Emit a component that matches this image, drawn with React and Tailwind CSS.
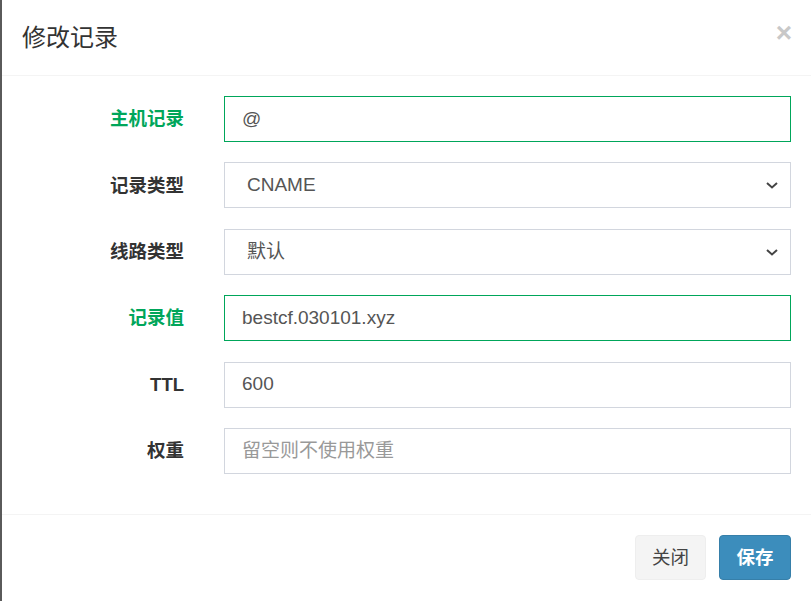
import React from "react";

const font = { fontFamily: '"Liberation Sans", "Noto Sans CJK SC", sans-serif' };

function Chevron() {
  return (
    <svg width="14" height="10" viewBox="0 0 14 10" className="absolute right-[11px] top-1/2 -translate-y-1/2">
      <path d="M2 3 L7 7.5 L12 3" fill="none" stroke="#444" strokeWidth="2" />
    </svg>
  );
}

function Row({ label, green, children }) {
  return (
    <div className="flex h-[46px] items-center">
      <div
        className={`w-[182px] shrink-0 text-right text-[18.5px] font-bold ${green ? "text-[#00a65a]" : "text-[#333]"}`}
      >
        {label}
      </div>
      <div className="ml-[40px] h-full flex-1">{children}</div>
    </div>
  );
}

function Input({ value, placeholder, green }) {
  return (
    <div
      className={`flex h-full items-center border bg-white pl-[17px] text-[19px] ${
        green ? "border-[#00a65a]" : "border-[#d2d6de]"
      } ${value ? "text-[#555]" : "text-[#999]"}`}
    >
      {value || placeholder}
    </div>
  );
}

function Select({ value }) {
  return (
    <div className="relative flex h-full items-center border border-[#d2d6de] bg-white pl-[22px] text-[19px] text-[#555]">
      {value}
      <Chevron />
    </div>
  );
}

export default function App() {
  return (
    <div className="flex h-[601px] w-[811px] bg-white" style={font}>
      <div className="w-[2px] shrink-0 bg-[#5a5a5a]" />
      <div className="flex flex-1 flex-col">
        <div className="flex h-[76px] shrink-0 items-center justify-between border-b border-[#f4f4f4] pl-[20px] pr-[19px]">
          <div className="text-[24px] text-[#333]">修改记录</div>
          <div className="-mt-[10px] text-[28px] font-bold leading-none text-[#c8c8c8]">×</div>
        </div>
        <div className="flex flex-col gap-[20.4px] pb-[40px] pr-[20px] pt-[20px]">
          <Row label="主机记录" green>
            <Input value="@" green />
          </Row>
          <Row label="记录类型">
            <Select value="CNAME" />
          </Row>
          <Row label="线路类型">
            <Select value="默认" />
          </Row>
          <Row label="记录值" green>
            <Input value="bestcf.030101.xyz" green />
          </Row>
          <Row label="TTL">
            <Input value="600" />
          </Row>
          <Row label="权重">
            <Input placeholder="留空则不使用权重" />
          </Row>
        </div>
        <div className="flex flex-1 items-start justify-end gap-[13px] border-t border-[#f4f4f4] pr-[20px] pt-[20px]">
          <button className="h-[45px] w-[71px] rounded-[4px] border border-[#eee] bg-[#f4f4f4] text-[18.5px] text-[#444]">
            关闭
          </button>
          <button className="h-[45px] w-[72px] rounded-[4px] border border-[#367fa9] bg-[#3c8dbc] text-[18.5px] font-bold text-white">
            保存
          </button>
        </div>
      </div>
    </div>
  );
}
